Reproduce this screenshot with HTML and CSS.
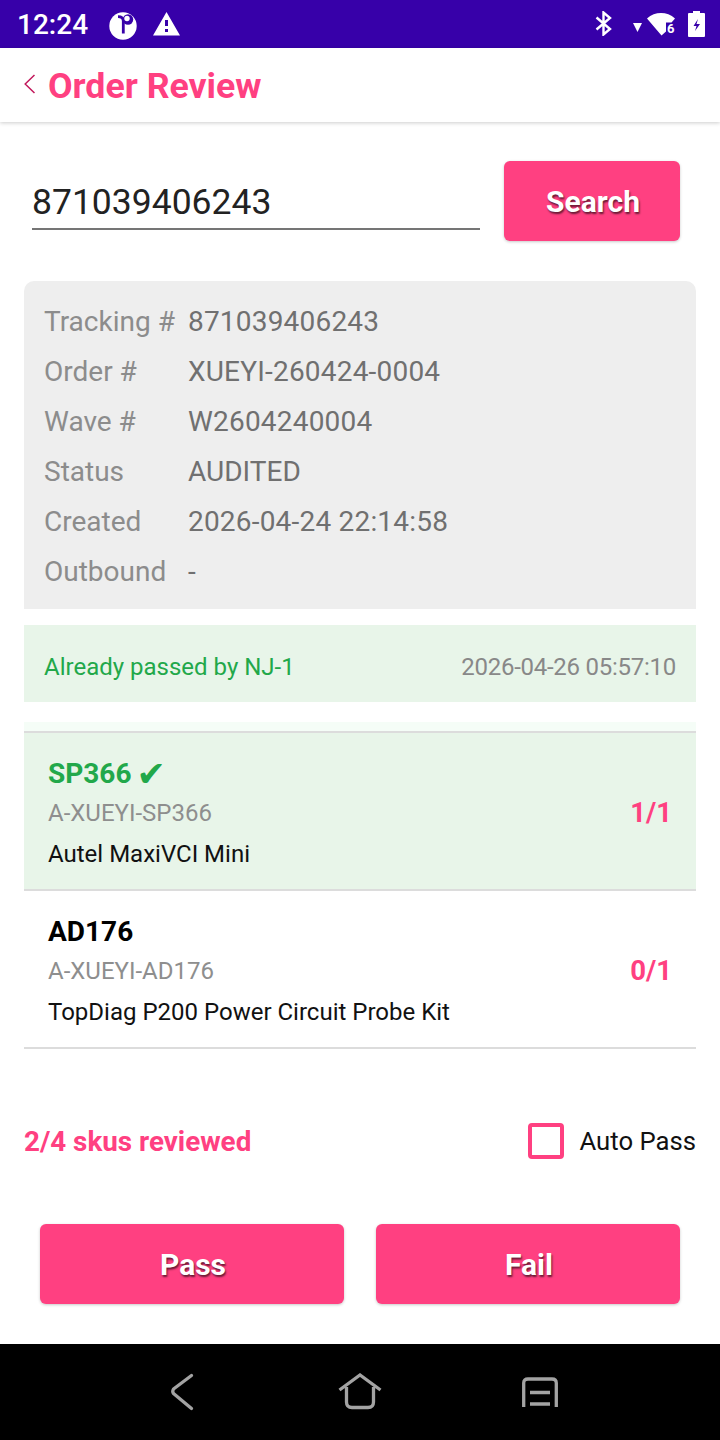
FILE: index.html
```html
<!DOCTYPE html>
<html lang="en">
<head>
<meta charset="utf-8">
<title>Order Review</title>
<link rel="stylesheet" href="styles.css">
</head>
<body>
<div class="screen">
  <div class="status">
    <span class="clock">12:24</span>
    <svg class="st-circle" width="28" height="28" viewBox="0 0 28 28"><circle cx="14" cy="14" r="13.700" fill="#fff"/><path fill="none" stroke="#3700a9" stroke-width="2.800" d="M14.300 21.500V9Q14.300 4.700 9 4.700"/><circle cx="19" cy="7.500" r="5.200" fill="#3700a9"/><circle cx="18" cy="6.500" r="2.700" fill="#fff"/></svg>
    <svg class="st-warn" width="28" height="24" viewBox="0 0 28 24"><path fill="#fff" fill-rule="evenodd" d="M13.500 0L27 23.500H0zM12 8v6h3V8zM12 17v3h3v-3z"/></svg>
    <span class="st-spacer"></span>
    <svg class="st-bt" width="17" height="25" viewBox="0 0 17 25"><path fill="none" stroke="#fff" stroke-width="2.400" d="M1.500 6.500L15 18L8.500 23.500V1.500L15 7L1.500 18.500"/></svg>
    <svg class="st-tri" width="9" height="9" viewBox="0 0 9 9"><path fill="#fff" d="M0 0H9L4.500 9z"/></svg>
    <svg class="st-wifi" width="28" height="23" viewBox="0 0 28 23"><path fill="#fff" d="M0 5.500C8 -1.800 20 -1.800 28 5.500L24.500 9.500H19V18.500L14.500 22.500z"/><text x="20" y="19.500" class="st-six">6</text></svg>
    <svg class="st-batt" width="17" height="26" viewBox="0 0 17 26"><path fill="#fff" fill-rule="evenodd" d="M5 0h7v2h4a1 1 0 0 1 1 1v22a1 1 0 0 1-1 1H1a1 1 0 0 1-1-1V3a1 1 0 0 1 1-1h4zM10 8L5.500 15h3l-1.500 5L12 13H8.500z"/></svg>
  </div>

  <header class="appbar">
    <svg class="back" width="11" height="20" viewBox="0 0 11 20"><path fill="none" stroke="#c2185b" stroke-width="1.500" d="M10.500 1L1.200 10L10.500 19"/></svg>
    <h1 class="title">Order Review</h1>
  </header>

  <main class="content">
    <div class="search-row">
      <div class="search-input">871039406243</div>
      <button class="btn btn-search">Search</button>
    </div>

    <dl class="info">
      <div class="info-row"><dt>Tracking #</dt><dd class="num">871039406243</dd></div>
      <div class="info-row"><dt>Order #</dt><dd class="num">XUEYI-260424-0004</dd></div>
      <div class="info-row"><dt>Wave #</dt><dd class="num">W2604240004</dd></div>
      <div class="info-row"><dt>Status</dt><dd>AUDITED</dd></div>
      <div class="info-row"><dt>Created</dt><dd class="num">2026-04-24 22:14:58</dd></div>
      <div class="info-row"><dt>Outbound</dt><dd>-</dd></div>
    </dl>

    <div class="passed">
      <span class="passed-text">Already passed by NJ-1</span>
      <span class="passed-time">2026-04-26 05:57:10</span>
    </div>

    <div class="list">
      <div class="fade"></div>
      <div class="item item-done">
        <div class="item-main">
          <div class="sku sku-done">SP366 <span class="tick">✔</span></div>
          <div class="code">A-XUEYI-SP366</div>
          <div class="name">Autel MaxiVCI Mini</div>
        </div>
        <div class="qty">1/1</div>
      </div>
      <div class="item">
        <div class="item-main">
          <div class="sku">AD176</div>
          <div class="code">A-XUEYI-AD176</div>
          <div class="name">TopDiag P200 Power Circuit Probe Kit</div>
        </div>
        <div class="qty">0/1</div>
      </div>
    </div>

    <div class="summary">
      <span class="reviewed">2/4 skus reviewed</span>
      <label class="auto"><span class="checkbox"></span><span>Auto Pass</span></label>
    </div>

    <div class="actions">
      <button class="btn btn-action">Pass</button>
      <button class="btn btn-action">Fail</button>
    </div>
  </main>

  <nav class="navbar">
    <svg class="nav-back" width="24" height="38" viewBox="0 0 24 38"><path fill="none" stroke="#a3a3a3" stroke-width="3.300" stroke-linecap="round" stroke-linejoin="round" d="M21.500 2.500L3.500 16Q2 18.500 3.500 20.500L21.500 35.500"/></svg>
    <svg class="nav-home" width="44" height="38" viewBox="0 0 44 38"><path fill="none" stroke="#a3a3a3" stroke-width="3.300" d="M1.500 17L22 2L42.500 17M8.500 14V29Q8.500 34.500 14 34.500H30Q35.500 34.500 35.500 29V14"/></svg>
    <svg class="nav-menu" width="36" height="30" viewBox="0 0 36 30"><path fill="none" stroke="#a3a3a3" stroke-width="3.300" d="M1.700 30V6Q1.700 2 6 2H30Q34.300 2 34.300 6V30M8 15.500H28M8 27H28"/></svg>
  </nav>
</div>
</body>
</html>
```
FILE: styles.css
```css
* { box-sizing: border-box; }
html, body { margin: 0; padding: 0; }
body { font-family: Roboto, "Liberation Sans", sans-serif; background: #fff; }
.screen { width: 720px; height: 1440px; display: flex; flex-direction: column; overflow: hidden; }

.status { height: 48px; flex: none; background: #3700a9; color: #fff; display: flex; align-items: flex-start; padding: 0 15px 0 17px; }
.clock { font-size: 28px; font-weight: 500; line-height: 48px; width: 92px; margin-top: 1px; }
.st-circle { flex: none; margin-top: 12px; }
.st-warn { flex: none; margin: 12px 0 0 16px; }
.st-spacer { flex: 1; }
.st-bt { margin: 11px 21px 0 0; }
.st-tri { margin: 23px 5px 0 0; }
.st-wifi { margin: 13px 13px 0 0; overflow: visible; }
.st-six { font-family: Roboto, sans-serif; font-size: 13px; font-weight: 700; fill: #fff; }
.st-batt { margin-top: 11px; }

.appbar { height: 74px; flex: none; display: flex; align-items: center; padding: 0 0 0 24px; background: #fff; box-shadow: 0 1px 4px rgba(0,0,0,.2); position: relative; }
.back { margin-top: -2px; }
.title { margin: 0 0 0 13px; padding-top: 2px; font-size: 35.7px; font-weight: 700; color: #ff4081; line-height: 72px; }

.content { flex: 1; display: flex; flex-direction: column; padding: 39px 24px 40px; }

.search-row { display: flex; align-items: flex-start; height: 80px; padding: 0 16px 0 8px; gap: 24px; }
.search-input { width: 448px; height: 69px; border-bottom: 2px solid #757575; font-size: 35.5px; color: #222; line-height: 82px; }
.btn { border: 0; border-radius: 6px; background: #ff4081; color: #fff; font-family: Roboto, sans-serif; font-weight: 700; font-size: 30px; text-shadow: 1px 2px 2px rgba(0,0,0,.6); box-shadow: 0 1px 3px rgba(0,0,0,.22); padding: 0 0 0 2px; height: 80px; }
.btn-search { width: 176px; }

.info { margin: 40px 0 0; background: #eee; border-radius: 10px 10px 0 0; padding: 15px 20px 13px; height: 328px; }
.info-row { display: flex; height: 50px; align-items: center; font-size: 28px; }
.info-row dt { width: 144px; color: #8c8c8c; }
.info-row dd { margin: 0; color: #707070; }
.info-row .num { letter-spacing: .2px; }

.passed { margin-top: 16px; height: 77px; background: #e8f5e9; display: flex; align-items: center; justify-content: space-between; padding: 6px 20px 0; font-size: 24px; }
.passed-text { color: #22a84a; }
.passed-time { color: #888; letter-spacing: -.26px; }

.list { margin-top: 20px; }
.fade { height: 9px; background: #f5fdf7; }
.item { height: 158px; border-top: 2px solid #dcdcdc; display: flex; align-items: center; padding: 0 24px; }
.item:last-child { border-bottom: 2px solid #dcdcdc; height: 160px; }
.item-done { background: #e8f5e9; }
.item-main { flex: 1; display: flex; flex-direction: column; padding-top: 4px; }
.sku { font-size: 28px; font-weight: 700; color: #000; line-height: 42px; height: 40px; }
.sku-done { color: #22a84a; }
.tick { font-family: "DejaVu Sans", sans-serif; font-size: 35px; font-weight: 700; line-height: 0; margin-left: -2px; vertical-align: -3px; }
.code { font-size: 24px; color: #8e8e8e; line-height: 40px; }
.name { font-size: 24px; color: #111; line-height: 42px; height: 40px; }
.qty { font-size: 27.5px; font-weight: 700; color: #ff4081; padding-top: 2px; }

.summary { margin-top: 72px; display: flex; align-items: center; justify-content: space-between; height: 40px; }
.reviewed { font-size: 27.8px; font-weight: 700; color: #ff4081; }
.auto { display: flex; align-items: center; gap: 15px; font-size: 25.7px; color: #111; }
.checkbox { width: 36px; height: 36px; border: 4px solid #ff4081; border-radius: 4px; display: block; }

.actions { margin-top: 63px; display: flex; gap: 32px; padding: 0 16px; }
.btn-action { flex: 1; height: 80px; }

.navbar { height: 96px; flex: none; background: #000; display: flex; align-items: center; padding-left: 170px; }
.nav-back { margin-right: 144px; }
.nav-home { margin-right: 140px; }
```
